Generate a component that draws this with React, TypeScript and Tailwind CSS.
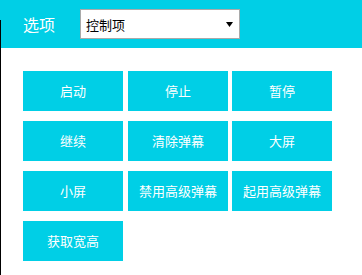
import React from "react";

const items = [
  "启动",
  "停止",
  "暂停",
  "继续",
  "清除弹幕",
  "大屏",
  "小屏",
  "禁用高级弹幕",
  "起用高级弹幕",
  "获取宽高",
];

export default function App() {
  return (
    <div
      className="relative w-[362px] h-[275px] bg-white overflow-hidden"
      style={{ fontFamily: '"Noto Sans CJK SC", "Noto Sans", sans-serif' }}
    >
      <div className="h-12 bg-[#00cfe6] flex items-center pl-[23px]">
        <span className="text-white text-[16px] leading-none">选项</span>
        <div className="ml-[25px] w-[160px] h-[30px] bg-white border border-[#a9a9a9] flex items-center pl-[5px] pr-[6px]">
          <span className="text-black text-[13px] leading-none flex-1">控制项</span>
          <svg width="7" height="5" viewBox="0 0 7 5" className="mt-[1px]">
            <polygon points="0,0 7,0 3.5,5" fill="#000" />
          </svg>
        </div>
      </div>
      <div className="pl-[23px] pt-[23px] grid grid-cols-[100px_101px_100px] gap-x-[4px] gap-y-[10px]">
        {items.map((t, i) => (
          <div
            key={t}
            className={`h-10 w-[100px] bg-[#00cfe6] text-white text-[13px] flex items-center justify-center ${
              i % 3 === 1 ? "justify-self-end" : ""
            }`}
          >
            {t}
          </div>
        ))}
      </div>
      <div className="absolute left-0 top-[20px] bottom-0 w-px bg-black" />
    </div>
  );
}
